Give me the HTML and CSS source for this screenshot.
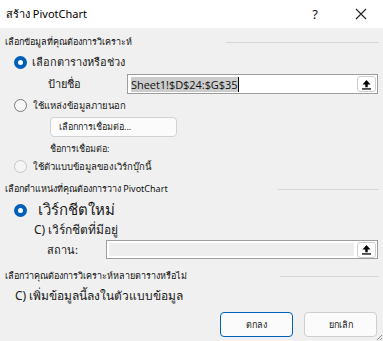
FILE: index.html
```html
<!DOCTYPE html>
<html lang="th">
<head>
<meta charset="utf-8">
<link rel="stylesheet" href="styles.css">
</head>
<body>
<div class="dialog">
  <div class="titlebar">
    <span class="title">สร้าง PivotChart</span>
    <span class="help">?</span>
    <svg class="close" width="12" height="12" viewBox="0 0 12 12"><path d="M1 1 L11 11 M11 1 L1 11" stroke="#222" stroke-width="1.1" fill="none"/></svg>
  </div>
  <div class="content">
    <div class="section s1">
      <span class="sec-label">เลือกข้อมูลที่คุณต้องการวิเคราะห์</span>
      <span class="sep sep1"></span>
    </div>
    <div class="row r-radio1">
      <span class="radio on"></span>
      <span class="opt">เลือกตารางหรือช่วง</span>
    </div>
    <div class="row r-range">
      <span class="field-label">ป้ายชื่อ</span>
      <div class="input range-input">
        <span class="sel">Sheet1!$D$24:$G$35</span><span class="caret"></span>
        <span class="upbtn"><svg width="11" height="11" viewBox="0 0 11 11"><path d="M5.5 1 L1.5 5.5 H4.3 V8.2 H6.7 V5.5 H9.5 Z" fill="#000"/><rect x="1" y="9.3" width="9" height="1.3" fill="#000"/></svg></span>
      </div>
    </div>
    <div class="row r-radio2">
      <span class="radio off"></span>
      <span class="opt small">ใช้แหล่งข้อมูลภายนอก</span>
    </div>
    <div class="row r-btn">
      <span class="conn-btn">เลือกการเชื่อมต่อ...</span>
    </div>
    <div class="row r-conn">
      <span class="conn-name">ชื่อการเชื่อมต่อ:</span>
    </div>
    <div class="row r-radio3">
      <span class="radio dis"></span>
      <span class="opt small">ใช้ตัวแบบข้อมูลของเวิร์กบุ๊กนี้</span>
    </div>
    <div class="section s2">
      <span class="sec-label">เลือกตำแหน่งที่คุณต้องการวาง PivotChart</span>
      <span class="sep sep2"></span>
    </div>
    <div class="row r-new">
      <span class="radio on"></span>
      <span class="opt big">เวิร์กชีตใหม่</span>
    </div>
    <div class="row r-exist">
      <span class="opt mid">C) เวิร์กชีตที่มีอยู่</span>
    </div>
    <div class="row r-loc">
      <span class="field-label loc-label">สถาน:</span>
      <div class="input loc-input">
        <span class="loc-fill"></span>
        <span class="upbtn"><svg width="11" height="11" viewBox="0 0 11 11"><path d="M5.5 1 L1.5 5.5 H4.3 V8.2 H6.7 V5.5 H9.5 Z" fill="#000"/><rect x="1" y="9.3" width="9" height="1.3" fill="#000"/></svg></span>
      </div>
    </div>
    <div class="section s3">
      <span class="sec-label">เลือกว่าคุณต้องการวิเคราะห์หลายตารางหรือไม่</span>
      <span class="sep sep3"></span>
    </div>
    <div class="row r-add">
      <span class="opt mid">C) เพิ่มข้อมูลนี้ลงในตัวแบบข้อมูล</span>
    </div>
    <div class="row r-buttons">
      <span class="btn primary">ตกลง</span>
      <span class="btn">ยกเลิก</span>
    </div>
  </div>
  <svg class="grip" width="8" height="8" viewBox="0 0 8 8"><path d="M7 2 L2 7 M7 5 L5 7" stroke="#8a8a8a" stroke-width="1"/></svg>
</div>
</body>
</html>
```
FILE: styles.css
```css
html, body {
  margin: 0;
  padding: 0;
}
body {
  width: 383px;
  height: 341px;
  overflow: hidden;
  font-family: "Noto Sans", "Liberation Sans", sans-serif;
  color: #1a1a1a;
}
.dialog {
  position: relative;
  width: 383px;
  height: 341px;
  background: #f0f0f0;
  display: flex;
  flex-direction: column;
}
.titlebar {
  height: 28px;
  background: #fff;
  display: flex;
  align-items: center;
  flex: none;
}
.title {
  margin-left: 6px;
  font-size: 11px;
  color: #000;
}
.help {
  margin-left: auto;
  font-size: 13px;
  margin-right: 37px;
  color: #111;
}
.close {
  margin-right: 16px;
}
.content {
  display: flex;
  flex-direction: column;
}
.section {
  display: flex;
  align-items: center;
  height: 14px;
  padding-left: 5px;
  padding-right: 4px;
}
.sec-label {
  font-size: 9px;
  color: #111;
  white-space: nowrap;
}
.sep {
  margin-left: auto;
  height: 1px;
  background: #d6d6d6;
}
.sep1 { width: 153px; }
.sep2 { width: 101px; }
.sep3 { width: 99px; }
.s1 { margin-top: 7px; }
.s2 { margin-top: 9px; }
.s3 { margin-top: 10px; }
.row {
  display: flex;
  align-items: center;
}
.radio {
  width: 13px;
  height: 13px;
  border-radius: 50%;
  box-sizing: border-box;
  flex: none;
  margin-left: 14px;
}
.radio.on {
  background: #005fb8;
  position: relative;
}
.radio.on::after {
  content: "";
  position: absolute;
  left: 4px;
  top: 4px;
  width: 5px;
  height: 5px;
  border-radius: 50%;
  background: #fff;
}
.radio.off {
  border: 1px solid #7a7a7a;
  background: #f7f7f7;
}
.radio.dis {
  border: 1px solid #c8c8c8;
  background: #f5f5f5;
}
.opt {
  font-size: 11px;
  margin-left: 5px;
  white-space: nowrap;
}
.opt.small { font-size: 9.5px; margin-left: 6px; }
.opt.big { font-size: 15px; margin-left: 11px; }
.opt.mid { font-size: 12px; }
.r-radio1 { margin-top: 6px; height: 14px; }
.r-range { margin-top: 5px; height: 20px; }
.field-label {
  font-size: 11px;
  margin-left: 48px;
  width: 79px;
  flex: none;
}
.input {
  box-sizing: border-box;
  height: 100%;
  border: 1px solid #9d9d9d;
  background: #fff;
  display: flex;
  align-items: center;
  position: relative;
}
.range-input {
  width: 251px;
}
.sel {
  margin-left: 3px;
  background: #cccccc;
  font-family: "Open Sans", "Noto Sans", sans-serif;
  font-size: 11px;
  line-height: 15px;
  color: #111;
  letter-spacing: -0.05px;
}
.caret {
  width: 1px;
  height: 15px;
  background: #000;
}
.upbtn {
  margin-left: auto;
  margin-right: 1px;
  width: 19px;
  height: 16px;
  box-sizing: border-box;
  border: 1px solid #cfcfcf;
  border-radius: 3px;
  background: #fff;
  display: flex;
  align-items: center;
  justify-content: center;
}
.r-radio2 { margin-top: 4px; height: 14px; }
.r-btn { margin-top: 5px; height: 20px; }
.conn-btn {
  margin-left: 50px;
  width: 127px;
  height: 20px;
  box-sizing: border-box;
  border: 1px solid #d2d2d2;
  border-radius: 4px;
  background: #fbfbfb;
  font-size: 9px;
  display: flex;
  align-items: center;
  padding-left: 8px;
}
.r-conn { margin-top: 5px; height: 14px; }
.conn-name {
  margin-left: 50px;
  font-size: 9px;
}
.r-radio3 { margin-top: 3px; height: 14px; }
.r-new { margin-top: 5px; height: 18px; }
.r-exist { margin-top: 3px; height: 14px; padding-left: 29px; }
.r-loc { margin-top: 4px; height: 19px; }
.loc-label {
  width: 59px;
  margin-left: 47px;
}
.loc-input {
  width: 272px;
}
.loc-fill {
  position: absolute;
  left: 2px;
  top: 2px;
  bottom: 2px;
  right: 23px;
  background: #eeeeee;
}
.r-add { margin-top: 4px; height: 16px; padding-left: 10px; }
.r-buttons {
  margin-top: 9px;
  height: 25px;
  justify-content: flex-end;
  gap: 11px;
  padding-right: 6px;
}
.btn {
  width: 73px;
  height: 25px;
  box-sizing: border-box;
  border: 1px solid #cfcfcf;
  border-radius: 4px;
  background: #fbfbfb;
  font-size: 9px;
  display: flex;
  align-items: center;
  justify-content: center;
}
.btn.primary {
  border-color: #005fb8;
}
.grip {
  position: absolute;
  right: 0;
  bottom: 0;
}
```
